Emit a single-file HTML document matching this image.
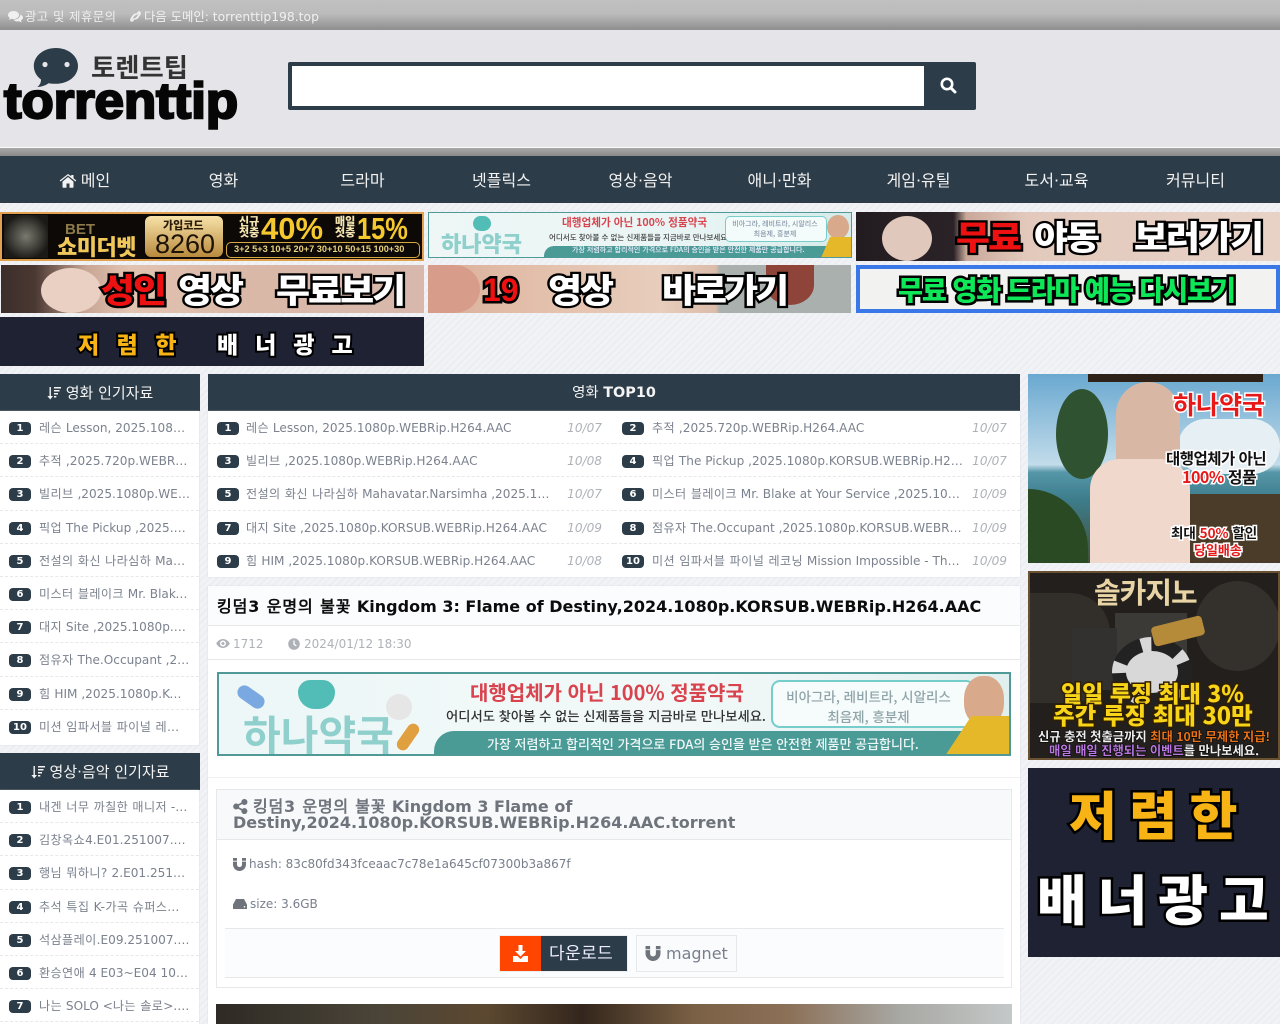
<!DOCTYPE html>
<html lang="ko"><head><meta charset="utf-8"><title>토렌트팁</title>
<style>
*{box-sizing:border-box;margin:0;padding:0}
html,body{width:1280px;height:1024px;overflow:hidden}
body{position:relative;font-family:"DejaVu Sans",sans-serif;font-size:12.1px;color:#777f8c;background:repeating-linear-gradient(135deg,#eff1f5 0 2px,#e9ebef 2px 3px,#f1f3f6 3px 5px)}
.a{position:absolute}
svg{display:block}
em{font-style:normal;letter-spacing:.4px}
.top{left:0;top:0;width:1280px;height:30px;background:linear-gradient(#c0c0c0 0,#bcbcbc 45%,#8e8e8e 100%);color:#f0f0f0}
.top span{position:absolute;top:9px;font-size:12.35px;line-height:16px;white-space:nowrap}
.hd{left:0;top:30px;width:1280px;height:118px;background:#e5e5e9;border-bottom:1px solid #fafafa}
.gr{left:0;top:148px;width:1280px;height:8px;background:linear-gradient(#a8a8a8,#8a8a8a)}
.nav{left:0;top:156px;width:1280px;height:47px;background:#2c3c48}
.nav a{position:absolute;top:0;width:139px;text-align:center;color:#f2f2f2;font-size:16px;line-height:49px;white-space:nowrap}
.sb{left:288px;top:62px;width:688px;height:48px;background:#2c3c48;border-radius:2px}
.sb i{position:absolute;left:4px;top:4px;width:632px;height:40px;background:#fff}
.b{position:absolute;overflow:hidden}
.t{position:absolute;white-space:nowrap;font-family:"Noto Sans CJK KR",sans-serif;font-weight:900;paint-order:stroke fill;line-height:1}
.ph{position:absolute;background:#2c3c48;color:#f4f4f4;height:37px;line-height:39px;text-align:center;font-size:15px;white-space:nowrap}
.lst{position:absolute;background:#fff;box-shadow:0 0 1px #ccd}
.r{position:relative;height:33.2px;border-bottom:1px dashed #e8e8e8;white-space:nowrap}
.r:last-child{border-bottom:0}
.n{position:absolute;top:11px;height:13px;width:22px;border-radius:4px;background:#2c3c48;color:#fff;font-size:10px;font-weight:700;line-height:13px;text-align:center}
.x{position:absolute;top:9px;line-height:16px;overflow:hidden;text-overflow:ellipsis;white-space:nowrap;color:#7b828e}
.d{position:absolute;top:9px;line-height:16px;font-style:italic;color:#aeb2b8}
.side .n{left:9px}.side .x{left:39px;width:151px}
.two{display:flex;flex-wrap:wrap;width:812px}
.two .r{width:406px}.two .r:nth-last-child(-n+2){border-bottom:0}
.two .n{left:9px}.two .x{left:38px;width:308px}.two .d{right:12px}
.two .r:nth-child(even) .n{left:8px}.two .r:nth-child(even) .x{left:38px;width:312px}.two .r:nth-child(even) .d{right:13px}
.big{font-size:37px;color:#fff;-webkit-text-stroke:5px #000;letter-spacing:-2px;transform:scaleY(.9);top:5px}
.red{color:#ee1111}
</style></head><body>

<div class="a top">
<svg class="a" style="left:8px;top:11px" width="15" height="12" viewBox="0 0 15 12"><path fill="#f0f0f0" d="M5.500 0C2.500 0 0 1.800 0 4c0 1.200.7 2.200 1.800 3-.2.7-.6 1.300-1.100 1.800 1 0 2-.4 2.700-1 .7.2 1.400.3 2.100.3 3 0 5.500-1.800 5.500-4.100S8.500 0 5.500 0z"/><path fill="#f0f0f0" d="M12.300 3.500c.1 3-2.800 5.100-6.400 5.100h-.6C6.200 9.800 7.700 10.500 9.500 10.500c.6 0 1.200-.1 1.700-.2.700.6 1.700 1 2.800 1-.5-.5-.9-1.100-1.100-1.800 1.300-.7 2.100-1.800 2.100-3.000 0-1.200-1-2.300-2.700-3z"/></svg>
<span style="left:25px;opacity:.95;letter-spacing:.45px">광고 및 제휴문의</span>
<svg class="a" style="left:130px;top:10px" width="11" height="13" viewBox="0 0 11 13"><path fill="none" stroke="#f0f0f0" stroke-width="1.800" d="M4.200 8.500 2.800 10.300c-.7.8-1.500.6-1.700-.2-.1-.6.100-1.100.4-1.600L3.800 5.300M6.800 4.500 8.200 2.700c.7-.8 1.500-.6 1.700.2.100.6-.1 1.100-.4 1.600L7.200 7.700M3.800 5.300c.8-1 1.800-1.100 2.300-.4M7.200 7.700c-.8 1-1.800 1.100-2.300.4"/></svg>
<span style="left:144px">다음 도메인: torrenttip198.top</span>
</div>

<div class="a hd"></div>
<svg class="a" style="left:0;top:40px" width="260" height="100" viewBox="0 0 260 100">
<path fill="#2c3c48" d="M56 8c-12.500 0-22.200 8-22.200 18 0 5.500 3 10.500 7.200 13.500 0 3.500-1.300 5.500-3.600 7.500 4.500-.1 8.500-2 11.300-3.800 2.300.4 4.800.6 7.300.6 12.500 0 22-8 22-17.800S68.500 8 56 8z"/>
<circle cx="45" cy="24.500" r="2.600" fill="#e5e5e9"/><circle cx="67" cy="24.500" r="2.600" fill="#e5e5e9"/>
<text x="91" y="37" font-family="Noto Sans CJK KR,sans-serif" font-weight="700" font-size="26" fill="#333" textLength="97" lengthAdjust="spacingAndGlyphs">토렌트팁</text>
<text x="4" y="78" font-family="Liberation Sans,sans-serif" font-weight="700" font-size="50" fill="#060606" stroke="#060606" stroke-width="2.400" textLength="234" lengthAdjust="spacingAndGlyphs">torrenttip</text>
</svg>
<div class="a sb"><i></i>
<svg class="a" style="left:652px;top:15px" width="17" height="17" viewBox="0 0 17 17"><circle cx="7" cy="7" r="5.200" fill="none" stroke="#fff" stroke-width="2.600"/><path d="M10.800 10.800 15 15" stroke="#fff" stroke-width="3" stroke-linecap="round"/></svg>
</div>
<div class="a gr"></div>
<div class="a nav">
<a style="left:15px"><svg style="display:inline-block;vertical-align:-2px;margin-right:4px" width="18" height="14" viewBox="0 0 17 14"><path fill="#f2f2f2" d="M8.500 3 3 7.600V13c0 .4.300.7.700.7H7V9.500h3v4.200h3.300c.4 0 .7-.3.700-.7V7.600zM16.800 6.500 14 4.200V1h-2.300v1.300L8.500 0 .2 6.500l.8 1L8.500 1.500 16 7.500z"/></svg>메인</a>
<a style="left:154px">영화</a><a style="left:293px">드라마</a><a style="left:432px">넷플릭스</a><a style="left:571px">영상·음악</a><a style="left:710px">애니·만화</a><a style="left:849px">게임·유틸</a><a style="left:987px">도서·교육</a><a style="left:1126px">커뮤니티</a>
</div>

<!-- banners -->
<div class="b" style="left:0;top:212px;width:424px;height:49px;background:#0c0906;border:2px solid #e0a250">
<div class="a" style="left:2px;top:1px;width:44px;height:43px;background:radial-gradient(ellipse at 50% 50%,#7a7a70,#1c1a16 75%)"></div>
<div class="t" style="left:63px;top:8px;font-size:15px;color:#8d7a4a;font-family:'Liberation Sans',sans-serif">BET</div>
<div class="t" style="left:55px;top:21px;font-size:22px;color:#f0c85a;letter-spacing:-.5px">쇼미더벳</div>
<div class="a" style="left:143px;top:2px;width:78px;height:41px;border-radius:6px;background:linear-gradient(#f7e2a8,#b98a3d)"></div>
<div class="t" style="left:161px;top:6px;font-size:11px;color:#2a1c08">가입코드</div>
<div class="t" style="left:153px;top:17px;font-size:27px;font-weight:500;color:#1c1206;font-family:'Liberation Sans',sans-serif">8260</div>
<div class="t" style="left:237px;top:2px;font-size:11px;color:#f4e4b0;line-height:11px">신규<br>첫충</div>
<div class="t" style="left:259px;top:-1px;font-size:31px;color:#f5c92e;font-family:'Liberation Sans',sans-serif">40%</div>
<div class="t" style="left:333px;top:2px;font-size:11px;color:#f4e4b0;line-height:11px">매일<br>첫충</div>
<div class="t" style="left:355px;top:-1px;font-size:31px;color:#f5c92e;font-family:'Liberation Sans',sans-serif;transform:scaleX(.82);transform-origin:0 0">15%</div>
<div class="a" style="left:224px;top:28px;width:194px;height:16px;border:1px solid #d8a840;border-radius:5px"></div>
<div class="t" style="left:232px;top:31px;font-size:9.200px;color:#e8d080;font-family:'Liberation Sans',sans-serif;font-weight:700">3+2 5+3 10+5 20+7 30+10 50+15 100+30</div>
</div>

<div class="b" style="left:428px;top:212px;width:424px;height:46px;background:linear-gradient(90deg,#eef7f6,#e8f4f4 65%,#d5ebe9);border:1px solid #4f9a96">
<div class="t" style="left:12px;top:19px;font-size:22px;color:#8fd0cc">하나약국</div>
<div class="a" style="left:44px;top:3px;width:18px;height:15px;border-radius:8px;background:#52bcb6"></div>
<div class="t" style="left:133px;top:5px;font-size:10.600px;font-weight:700;color:#d8434e">대행업체가 아닌 100% 정품약국</div>
<div class="t" style="left:120px;top:21px;font-size:7.500px;font-weight:500;color:#444">어디서도 찾아볼 수 없는 신제품들을 지금바로 만나보세요.</div>
<div class="a" style="left:296px;top:3px;width:102px;height:26px;border:1px solid #7cc;border-radius:5px;background:#f4fbfb"></div>
<div class="t" style="left:303px;top:6px;font-size:7px;font-weight:500;color:#89a;line-height:10px;text-align:center;width:86px;white-space:normal">비아그라, 레비트라, 시알리스 최음제, 흥분제</div>
<div class="a" style="left:115px;top:33px;width:290px;height:12px;border-radius:10px 0 0 0;background:#4a9a96"></div>
<div class="t" style="left:143px;top:34px;font-size:7px;font-weight:500;color:#eef">가장 저렴하고 합리적인 가격으로 FDA의 승인을 받은 안전한 제품만 공급합니다.</div>
<div class="a" style="left:398px;top:2px;width:22px;height:24px;border-radius:50%;background:#d8a98a"></div>
<div class="a" style="left:392px;top:24px;width:30px;height:21px;background:#e4b828;clip-path:polygon(30% 0,100% 0,100% 100%,0 100%)"></div>
</div>

<div class="b" style="left:856px;top:212px;width:424px;height:49px;background:linear-gradient(90deg,#221c20 0,#2a2226 23%,#c9a89a 26%,#e2c9bc 40%,#e8d2c6 100%)">
<div class="a" style="left:26px;top:4px;width:50px;height:45px;border-radius:50%;background:#e0c8bc"></div>
<div class="t big red" style="left:100px">무료</div>
<div class="t big" style="left:178px">야동</div>
<div class="t big" style="left:278px">보러가기</div>
</div>

<div class="b" style="left:1px;top:265px;width:423px;height:48px;background:linear-gradient(90deg,#3c2e2a 0,#4a3832 8%,#c8a594 20%,#e2c2b0 30%,#d9b8a8 60%,#d8b8ac 100%)">
<div class="a" style="left:40px;top:3px;width:60px;height:45px;border-radius:50%;background:#e9d0c2"></div>
<div class="t big red" style="left:100px">성인</div>
<div class="t big" style="left:177px">영상</div>
<div class="t big" style="left:275px">무료보기</div>
</div>

<div class="b" style="left:428px;top:265px;width:423px;height:48px;background:linear-gradient(90deg,#d8ad98 0,#e2bda8 20%,#e8cdbc 55%,#dcbcaa 68%,#a9b0ae 69%,#a9b0ae 100%)">
<div class="a" style="left:0;top:0;width:52px;height:48px;border-radius:0 50% 50% 0;background:#d89c8a"></div>
<div class="a" style="left:338px;top:0;width:48px;height:40px;border-radius:0 0 50% 50%;background:#8e4438"></div>
<div class="t" style="left:55px;top:9px;font-size:32px;color:#ee1111;-webkit-text-stroke:5px #000;font-family:'Liberation Sans',sans-serif">19</div>
<div class="t big" style="left:120px">영상</div>
<div class="t big" style="left:234px;letter-spacing:-3px">바로가기</div>
</div>

<div class="b" style="left:856px;top:265px;width:424px;height:48px;background:#f2f2f0;border:4px solid #3b78e7">
<div class="t" style="left:38px;top:6px;font-size:27.200px;color:#0ee858;-webkit-text-stroke:5px #000;letter-spacing:-1.100px">무료 영화 드라마 예능 다시보기</div>
</div>

<div class="b" style="left:0;top:317px;width:424px;height:49px;background:#1f2233">
<div class="t" style="left:78px;top:15px;font-size:23px;color:#f8b415;-webkit-text-stroke:4px #000;letter-spacing:17.500px">저렴한</div>
<div class="t" style="left:217px;top:15px;font-size:23px;color:#fff;-webkit-text-stroke:4px #000;letter-spacing:17px">배너광고</div>
</div>

<!-- left column -->
<div class="ph" style="left:0;top:374px;width:200px"><svg style="display:inline-block;vertical-align:-2px;margin-right:5px" width="14" height="14" viewBox="0 0 14 14"><path fill="#f4f4f4" d="M2.500 1h1.400v9H6L3.200 13.500.4 10h2.100zM7 1h7v1.500H7zM7 4h5.500v1.500H7zM7 7h4v1.500H7zM7 10h2.300v1.500H7z"/></svg>영화 인기자료</div>
<div class="lst side" style="left:0;top:411px;width:199px;height:334px">
<div class="r"><b class="n">1</b><span class="x"><em>레슨</em> Lesson, 2025.1080p.WEBRip.H264.AAC</span></div>
<div class="r"><b class="n">2</b><span class="x"><em>추적</em> ,2025.720p.WEBRip.H264.AAC</span></div>
<div class="r"><b class="n">3</b><span class="x"><em>빌리브</em> ,2025.1080p.WEBRip.H264.AAC</span></div>
<div class="r"><b class="n">4</b><span class="x"><em>픽업</em> The Pickup ,2025.1080p.KORSUB</span></div>
<div class="r"><b class="n">5</b><span class="x"><em>전설의 화신 나라심하</em> Mahavatar.Narsimha</span></div>
<div class="r"><b class="n">6</b><span class="x"><em>미스터 블레이크</em> Mr. Blake at Your Service</span></div>
<div class="r"><b class="n">7</b><span class="x"><em>대지</em> Site ,2025.1080p.KORSUB.WEBRip</span></div>
<div class="r"><b class="n">8</b><span class="x"><em>점유자</em> The.Occupant ,2025.1080p.KORSUB</span></div>
<div class="r"><b class="n">9</b><span class="x"><em>힘</em> HIM ,2025.1080p.KORSUB.WEBRip</span></div>
<div class="r"><b class="n">10</b><span class="x"><em>미션 임파서블 파이널 레코닝</em> Mission Impossible</span></div>
</div>
<div class="ph" style="left:0;top:753px;width:200px"><svg style="display:inline-block;vertical-align:-2px;margin-right:5px" width="14" height="14" viewBox="0 0 14 14"><path fill="#f4f4f4" d="M2.500 1h1.400v9H6L3.200 13.500.4 10h2.100zM7 1h7v1.500H7zM7 4h5.500v1.500H7zM7 7h4v1.500H7zM7 10h2.300v1.500H7z"/></svg>영상·음악 인기자료</div>
<div class="lst side" style="left:0;top:790px;width:199px;height:240px">
<div class="r"><b class="n">1</b><span class="x"><em>내겐 너무 까칠한 매니저</em> -비서진.E01</span></div>
<div class="r"><b class="n">2</b><span class="x"><em>김창옥쇼</em>4.E01.251007.1080p.WEB</span></div>
<div class="r"><b class="n">3</b><span class="x"><em>행님 뭐하니?</em> 2.E01.251007.1080p</span></div>
<div class="r"><b class="n">4</b><span class="x"><em>추석 특집 K-가곡 슈퍼스타</em>.E01.251007</span></div>
<div class="r"><b class="n">5</b><span class="x"><em>석삼플레이</em>.E09.251007.1080p.WEB</span></div>
<div class="r"><b class="n">6</b><span class="x"><em>환승연애</em> 4 E03~E04 1080p.WEB</span></div>
<div class="r"><b class="n">7</b><span class="x"><em>나는</em> SOLO &lt;<em>나는 솔로</em>&gt;.E01.1080p</span></div>
<div class="r"></div>
</div>

<!-- center -->
<div class="ph" style="left:208px;top:374px;width:812px;font-size:14.400px;line-height:39px">영화 <b>TOP10</b></div>
<div class="lst two" style="left:208px;top:411px;width:812px;height:166px">
<div class="r"><b class="n">1</b><span class="x"><em>레슨</em> Lesson, 2025.1080p.WEBRip.H264.AAC</span><span class="d">10/07</span></div>
<div class="r"><b class="n">2</b><span class="x"><em>추적</em> ,2025.720p.WEBRip.H264.AAC</span><span class="d">10/07</span></div>
<div class="r"><b class="n">3</b><span class="x"><em>빌리브</em> ,2025.1080p.WEBRip.H264.AAC</span><span class="d">10/08</span></div>
<div class="r"><b class="n">4</b><span class="x"><em>픽업</em> The Pickup ,2025.1080p.KORSUB.WEBRip.H264.AAC</span><span class="d">10/07</span></div>
<div class="r"><b class="n">5</b><span class="x"><em>전설의 화신 나라심하</em> Mahavatar.Narsimha ,2025.1080p.WEBRip</span><span class="d">10/07</span></div>
<div class="r"><b class="n">6</b><span class="x"><em>미스터 블레이크</em> Mr. Blake at Your Service ,2025.1080p.WEBRip</span><span class="d">10/09</span></div>
<div class="r"><b class="n">7</b><span class="x"><em>대지</em> Site ,2025.1080p.KORSUB.WEBRip.H264.AAC</span><span class="d">10/09</span></div>
<div class="r"><b class="n">8</b><span class="x"><em>점유자</em> The.Occupant ,2025.1080p.KORSUB.WEBRip.H264.AAC</span><span class="d">10/09</span></div>
<div class="r"><b class="n">9</b><span class="x"><em>힘</em> HIM ,2025.1080p.KORSUB.WEBRip.H264.AAC</span><span class="d">10/08</span></div>
<div class="r"><b class="n">10</b><span class="x"><em>미션 임파서블 파이널 레코닝</em> Mission Impossible - The Final</span><span class="d">10/09</span></div>
</div>

<div class="a" style="left:208px;top:586px;width:812px;height:438px;background:#fff;box-shadow:0 0 1px #ccd"></div>
<div class="a" style="left:208px;top:586px;width:812px;height:40px;background:#fbfcfd;border-bottom:1px solid #e8e8e8"></div>
<div class="a" style="left:217px;top:597px;font-size:16px;font-weight:700;color:#0c0c0c;line-height:20px;white-space:nowrap"><em style="letter-spacing:.9px">킹덤3 운명의 불꽃</em> Kingdom 3: Flame of Destiny,2024.1080p.KORSUB.WEBRip.H264.AAC</div>
<div class="a" style="left:208px;top:659px;width:812px;height:1px;background:#e8e8e8"></div>
<svg class="a" style="left:216px;top:638px" width="14" height="11" viewBox="0 0 14 11"><path fill="#aeb2b8" fill-rule="evenodd" d="M7 1C4 1 1.500 3 .2 5.500 1.500 8 4 10 7 10s5.500-2 6.800-4.500C12.500 3 10 1 7 1zm0 1.500a3 3 0 1 1 0 6 3 3 0 0 1 0-6z"/><circle cx="7" cy="5.500" r="1.500" fill="#aeb2b8"/></svg>
<div class="a" style="left:233px;top:636px;font-size:12px;line-height:16px;color:#aeb2b8">1712</div>
<svg class="a" style="left:288px;top:638px" width="12" height="12" viewBox="0 0 12 12"><circle cx="6" cy="6" r="5.800" fill="#aeb2b8"/><path d="M6 2.500V6.300L8.300 7.800" stroke="#fff" stroke-width="1.300" fill="none"/></svg>
<div class="a" style="left:304px;top:636px;font-size:12px;line-height:16px;color:#aeb2b8">2024/01/12 18:30</div>

<div class="b" style="left:217px;top:672px;width:794px;height:84px;background:linear-gradient(90deg,#edf7f7,#f2f8f8 60%,#dff0ef);border:2px solid #4f9a96">
<div class="t" style="left:24px;top:38px;font-size:41px;font-weight:700;color:#8fd0cc">하나약국</div>
<div class="a" style="left:79px;top:6px;width:37px;height:29px;border-radius:16px 16px 22px 22px;background:#52bcb6"></div>
<div class="a" style="left:17px;top:16px;width:30px;height:14px;border-radius:7px;background:#7aa8e0;transform:rotate(35deg)"></div>
<div class="a" style="left:167px;top:20px;width:26px;height:26px;border-radius:50%;background:#e6e6e6"></div>
<div class="a" style="left:183px;top:48px;width:12px;height:30px;border-radius:6px;background:#e0a040;transform:rotate(35deg)"></div>
<div class="t" style="left:251px;top:8px;font-size:20px;font-weight:700;color:#d8434e">대행업체가 아닌 100% 정품약국</div>
<div class="t" style="left:227px;top:35px;font-size:13.300px;font-weight:500;color:#333">어디서도 찾아볼 수 없는 신제품들을 지금바로 만나보세요.</div>
<div class="a" style="left:552px;top:6px;width:204px;height:48px;border:2px solid #7cc;border-radius:9px;background:#f6fbfb"></div>
<div class="t" style="left:567px;top:12px;font-size:13.500px;font-weight:500;color:#8fa4a8;width:165px;text-align:center;white-space:normal;line-height:20px">비아그라, 레비트라, 시알리스 최음제, 흥분제</div>
<div class="a" style="left:215px;top:57px;width:577px;height:25px;border-radius:20px 0 0 0;background:#4a9a96"></div>
<div class="t" style="left:268px;top:63px;font-size:13px;font-weight:500;color:#eef6f6">가장 저렴하고 합리적인 가격으로 FDA의 승인을 받은 안전한 제품만 공급합니다.</div>
<div class="a" style="left:745px;top:2px;width:40px;height:50px;border-radius:45%;background:#d8a98a"></div>
<div class="a" style="left:726px;top:42px;width:66px;height:40px;background:#e4b828;clip-path:polygon(40% 0,100% 0,100% 100%,0 100%)"></div>
</div>
<div class="a" style="left:208px;top:777px;width:812px;height:1px;background:#f0f0f0"></div>

<div class="a" style="left:216px;top:789px;width:796px;height:199px;border:1px solid #e6e8ea;background:#fff">
<div class="a" style="left:0;top:0;width:794px;height:50px;background:#f7f9fb;border-bottom:1px solid #e6e8ea"></div>
<svg class="a" style="left:16px;top:9px" width="15" height="15" viewBox="0 0 15 15"><path fill="#6f747c" d="M11.500 0a3 3 0 1 1-2.300 5L6 6.700a3 3 0 0 1 0 1.600L9.200 10a3 3 0 1 1-.8 1.500L5.100 9.800a3 3 0 1 1 0-4.600l3.300-1.700A3 3 0 0 1 11.500 0z"/></svg>
<div class="a" style="left:16px;top:9px;width:560px;font-size:16px;font-weight:700;color:#6f747c;line-height:16px;text-indent:20px"><em style="letter-spacing:.8px">킹덤3 운명의 불꽃</em> Kingdom 3 Flame of Destiny,2024.1080p.KORSUB.WEBRip.H264.AAC.torrent</div>
<svg class="a" style="left:16px;top:68px" width="13" height="13" viewBox="0 0 13 13"><path fill="#6f747c" d="M0 0h4v6.500c0 1.500 1 2.500 2.500 2.500S9 8 9 6.500V0h4v6.500C13 10 10 13 6.500 13S0 10 0 6.500z"/><path fill="#fff" d="M0 2.800h4v.8H0zM9 2.800h4v.8H9z"/></svg>
<div class="a" style="left:32px;top:66px;line-height:16px;font-size:12px;color:#777f8c">hash: 83c80fd343fceaac7c78e1a645cf07300b3a867f</div>
<svg class="a" style="left:16px;top:109px" width="14" height="10" viewBox="0 0 14 10"><path fill="#6f747c" d="M3 0h8l3 5.500V10H0V5.500z"/><circle cx="11.500" cy="7.800" r=".8" fill="#fff"/></svg>
<div class="a" style="left:33px;top:106px;line-height:16px;font-size:12px;color:#777f8c">size: 3.6GB</div>
<div class="a" style="left:8px;top:138px;width:779px;height:50px;background:#fbfcfd;border-top:1px solid #e8e8e8;border-bottom:1px solid #e8e8e8"></div>
</div>
<div class="a" style="left:499px;top:935px;width:129px;height:37px;border:1px solid #eceef0"></div>
<div class="a" style="left:500px;top:936px;width:41px;height:35px;background:#ff4500"></div>
<div class="a" style="left:541px;top:936px;width:86px;height:35px;background:#2c3c48;color:#eef;font-size:17px;line-height:37px;text-indent:8px;white-space:nowrap;letter-spacing:.4px">다운로드</div>
<svg class="a" style="left:512px;top:945px" width="17" height="17" viewBox="0 0 17 17"><path fill="#fff" d="M6.500 0h4v6H14L8.500 11.500 3 6h3.500z"/><path fill="#fff" d="M1 11h4.500l3 3 3-3H16v6H1z"/></svg>
<div class="a" style="left:636px;top:935px;width:101px;height:37px;border:1px solid #e6e8ea;background:#fafbfc;color:#777f8c;font-size:16px;line-height:36px;text-indent:29px;white-space:nowrap">magnet</div>
<svg class="a" style="left:645px;top:946px" width="16" height="15" viewBox="0 0 13 13"><path fill="#6f747c" d="M0 0h4v6.500c0 1.500 1 2.500 2.500 2.500S9 8 9 6.500V0h4v6.500C13 10 10 13 6.500 13S0 10 0 6.500z"/><path fill="#fafbfc" d="M0 2.800h4v.8H0zM9 2.800h4v.8H9z"/></svg>
<div class="a" style="left:216px;top:1004px;width:796px;height:20px;background:linear-gradient(90deg,#2e2a24 0,#4a4438 20%,#5c4830 34%,#33261c 46%,#7a6044 60%,#8c7058 72%,#a8a8a4 86%,#c4c8c8 100%)"></div>

<!-- right -->
<div class="b" style="left:1028px;top:374px;width:252px;height:189px;background:linear-gradient(#6aa8d0 0,#c2dcea 48%,#5596a8 52%,#3d7d8c 66%,#43503a 100%)">
<div class="a" style="left:60px;top:0;width:175px;height:8px;background:#2e2218"></div>
<div class="a" style="left:28px;top:15px;width:52px;height:90px;border-radius:50%;background:#2f5230"></div>
<div class="a" style="left:0;top:115px;width:60px;height:74px;background:#2a4a24;border-radius:0 60px 0 0"></div>
<div class="a" style="left:150px;top:45px;width:102px;height:55px;background:#e6eff4;border-radius:30px"></div>
<div class="a" style="left:150px;top:120px;width:102px;height:69px;background:#4a3c28"></div>
<div class="a" style="left:88px;top:8px;width:64px;height:110px;background:#d8b8a4;border-radius:32px 32px 20px 20px"></div>
<div class="a" style="left:62px;top:85px;width:100px;height:104px;background:#f0d8cc;border-radius:30px 30px 0 0"></div>
<div class="t" style="left:145px;top:18px;font-size:25px;font-weight:700;color:#e81818;-webkit-text-stroke:3px #fff">하나약국</div>
<div class="t" style="left:138px;top:77px;font-size:15.500px;font-weight:700;color:#111;-webkit-text-stroke:3px #fff;letter-spacing:-.5px">대행업체가 아닌</div>
<div class="t" style="left:154px;top:94px;font-size:16px;font-weight:700;color:#e81818;-webkit-text-stroke:3px #fff;letter-spacing:-.5px">100% <span style="color:#111">정품</span></div>
<div class="t" style="left:143px;top:152px;font-size:13.500px;font-weight:700;color:#111;-webkit-text-stroke:3px #fff">최대 <span style="color:#e81818">50%</span> 할인</div>
<div class="t" style="left:166px;top:169px;font-size:13px;font-weight:700;color:#e81818;-webkit-text-stroke:3px #fff">당일배송</div>
</div>

<div class="b" style="left:1028px;top:571px;width:252px;height:189px;background:#221f1c;border:2px solid #6a5230">
<div class="a" style="left:0;top:20px;width:80px;height:110px;background:#322e2a;border-radius:0 40px 40px 0"></div>
<div class="a" style="left:165px;top:8px;width:85px;height:90px;background:#34302c;border-radius:50%"></div>
<div class="a" style="left:85px;top:40px;width:72px;height:78px;background:#3c3a36"></div>
<div class="a" style="left:42px;top:55px;width:45px;height:62px;background:#333130"></div>
<div class="a" style="left:82px;top:64px;width:80px;height:70px;border-radius:50%;background:#d8d8d8;border:14px dashed #222"></div>
<div class="a" style="left:122px;top:48px;width:52px;height:20px;background:#b58a38;transform:rotate(-14deg);border-radius:4px"></div>
<div class="t" style="left:64px;top:4px;font-size:29px;font-weight:700;color:#e8d4a4;letter-spacing:-1px">솔카지노</div>
<div class="t" style="left:31px;top:108px;font-size:23px;font-weight:900;color:#f8d418;-webkit-text-stroke:3px #301e00">일일 루징 최대 3%</div>
<div class="t" style="left:23px;top:130px;font-size:23.500px;font-weight:900;color:#f8d418;-webkit-text-stroke:3px #301e00">주간 루징 최대 30만</div>
<div class="t" style="left:8px;top:157px;font-size:12.300px;font-weight:700;color:#eee;-webkit-text-stroke:1px #000">신규 충전 첫출금까지 <span style="color:#e8741a">최대 10만 무제한 지급!</span></div>
<div class="t" style="left:19px;top:171px;font-size:12.300px;font-weight:700;color:#b878e0;-webkit-text-stroke:1px #000">매일 매일 진행되는 이벤트<span style="color:#eee">를 만나보세요.</span></div>
</div>

<div class="b" style="left:1028px;top:768px;width:252px;height:189px;background:#1f2233">
<div class="t" style="left:41px;top:19px;font-size:52px;color:#f8b415;-webkit-text-stroke:5px #000;letter-spacing:12.500px">저렴한</div>
<div class="t" style="left:9px;top:102px;font-size:54px;color:#fff;-webkit-text-stroke:5px #000;letter-spacing:11px">배너광고</div>
</div>
</body></html>
